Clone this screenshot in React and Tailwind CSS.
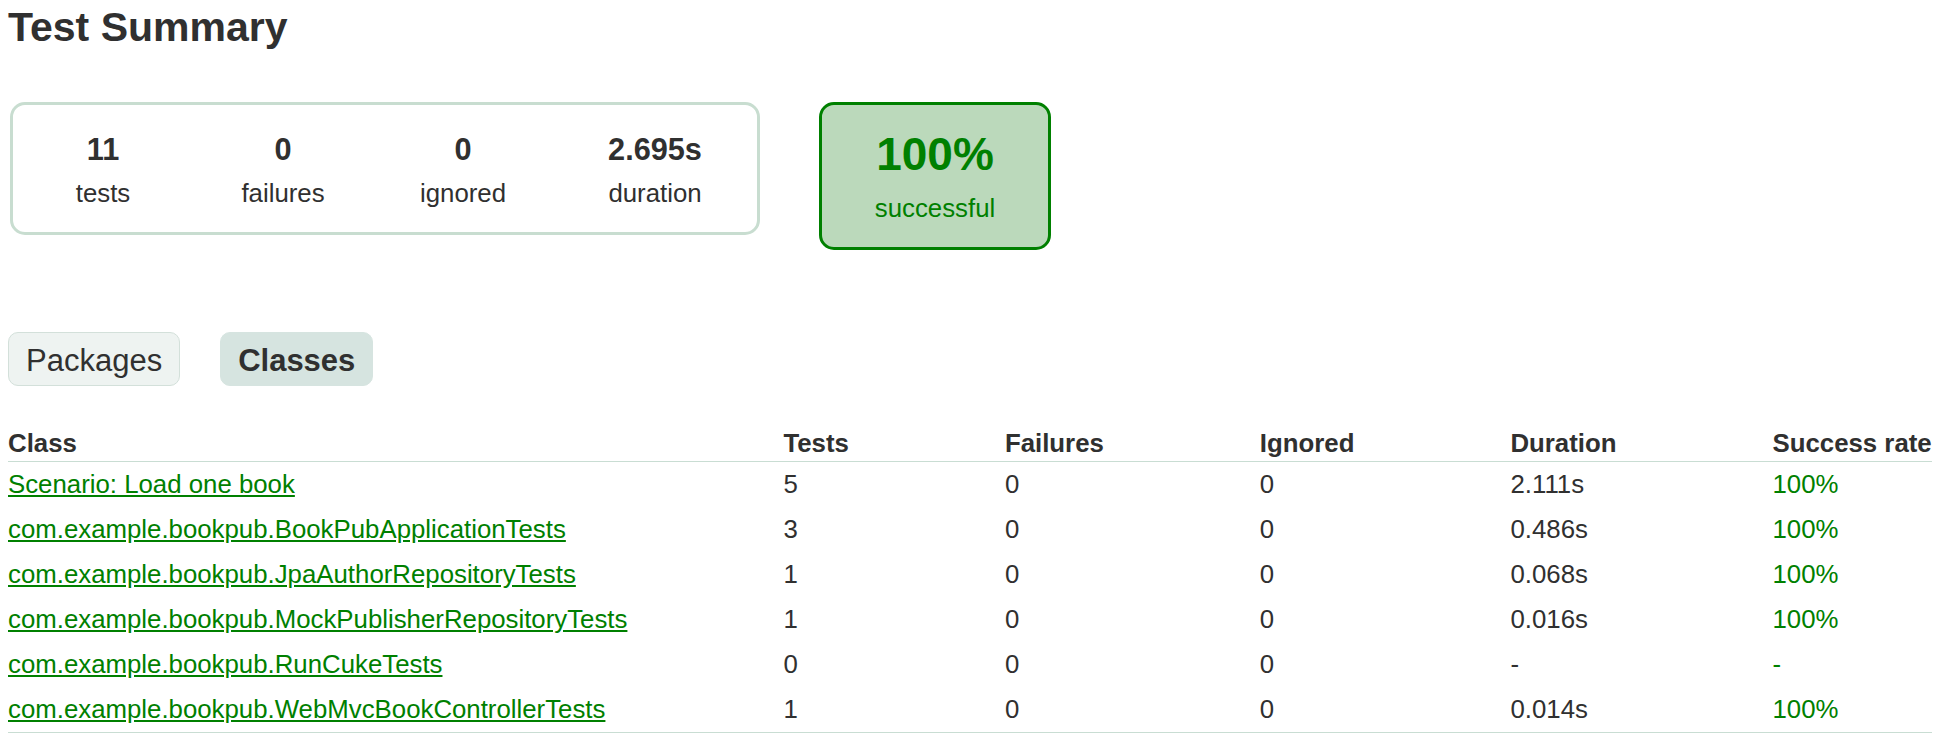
import React from "react";

const counters = [
  { value: "11", label: "tests", width: "w-[180px]" },
  { value: "0", label: "failures", width: "w-[180px]" },
  { value: "0", label: "ignored", width: "w-[180px]" },
  { value: "2.695s", label: "duration", width: "w-[204px]" },
];

const rows = [
  { name: "Scenario: Load one book", tests: 5, failures: 0, ignored: 0, duration: "2.111s", rate: "100%" },
  { name: "com.example.bookpub.BookPubApplicationTests", tests: 3, failures: 0, ignored: 0, duration: "0.486s", rate: "100%" },
  { name: "com.example.bookpub.JpaAuthorRepositoryTests", tests: 1, failures: 0, ignored: 0, duration: "0.068s", rate: "100%" },
  { name: "com.example.bookpub.MockPublisherRepositoryTests", tests: 1, failures: 0, ignored: 0, duration: "0.016s", rate: "100%" },
  { name: "com.example.bookpub.RunCukeTests", tests: 0, failures: 0, ignored: 0, duration: "-", rate: "-" },
  { name: "com.example.bookpub.WebMvcBookControllerTests", tests: 1, failures: 0, ignored: 0, duration: "0.014s", rate: "100%" },
];

function SummaryBox() {
  return (
    <div className="flex items-start">
      {/* counters group */}
      <div className="ml-[2px] flex w-[750px] rounded-[15px] border-[3px] border-[#c8ddd0] pt-[27px] pb-[24px]">
        {counters.map((c) => (
          <div key={c.label} className={`${c.width} text-center`}>
            <div className="text-[30.7px] leading-[35px] font-bold">{c.value}</div>
            <div className="mt-[11px] text-[25.8px] leading-[30px]">{c.label}</div>
          </div>
        ))}
      </div>

      {/* success rate */}
      <div className="ml-[59px] w-[232px] rounded-[15px] border-[3px] border-[#008000] bg-[#bbd9bb] pt-[23px] pb-[24px] text-center text-[#008000]">
        <div className="text-[46px] leading-[53px] font-bold">100%</div>
        <div className="mt-[12px] text-[25.8px] leading-[30px]">successful</div>
      </div>
    </div>
  );
}

function Tabs() {
  return (
    <ul className="mt-[82px] flex gap-[40px]">
      <li className="rounded-[10px] border border-[#d3e0da] bg-[#eef3f1] px-[17px] pt-[10px] pb-[7px] text-[31px] leading-[35px]">
        Packages
      </li>
      <li className="rounded-[10px] border border-[#d6e4e0] bg-[#d6e4e0] px-[17px] pt-[10px] pb-[7px] text-[31px] leading-[35px] font-bold">
        Classes
      </li>
    </ul>
  );
}

function ClassTable() {
  const th = "pl-[156px] pb-[3px] text-left font-bold whitespace-nowrap leading-[29px]";
  const td = "pl-[156px] py-[8px] whitespace-nowrap leading-[29px]";
  return (
    <table className="mt-[43px] border-collapse border-b border-[#c9ddd3] text-[25.8px]">
      <thead>
        <tr className="border-b border-[#c9ddd3]">
          <th className="pb-[3px] text-left font-bold whitespace-nowrap leading-[29px]">Class</th>
          <th className={th}>Tests</th>
          <th className={th}>Failures</th>
          <th className={th}>Ignored</th>
          <th className={th}>Duration</th>
          <th className={th}>Success rate</th>
        </tr>
      </thead>
      <tbody>
        {rows.map((r) => (
          <tr key={r.name}>
            <td className="py-[8px] whitespace-nowrap leading-[29px]">
              <a href="#" className="text-[#008000] underline">{r.name}</a>
            </td>
            <td className={td}>{r.tests}</td>
            <td className={td}>{r.failures}</td>
            <td className={td}>{r.ignored}</td>
            <td className={td}>{r.duration}</td>
            <td className={`${td} text-[#008000]`}>{r.rate}</td>
          </tr>
        ))}
      </tbody>
    </table>
  );
}

export default function App() {
  return (
    <div className="min-h-[750px] w-[1950px] bg-white pt-[4px] pl-2 font-['Liberation_Sans',Arial,sans-serif] text-[#303030]">
      <h1 className="text-[41px] leading-[46px] font-bold whitespace-nowrap">Test Summary</h1>
      <div className="mt-[52px]">
        <SummaryBox />
      </div>
      <Tabs />
      <ClassTable />
    </div>
  );
}
